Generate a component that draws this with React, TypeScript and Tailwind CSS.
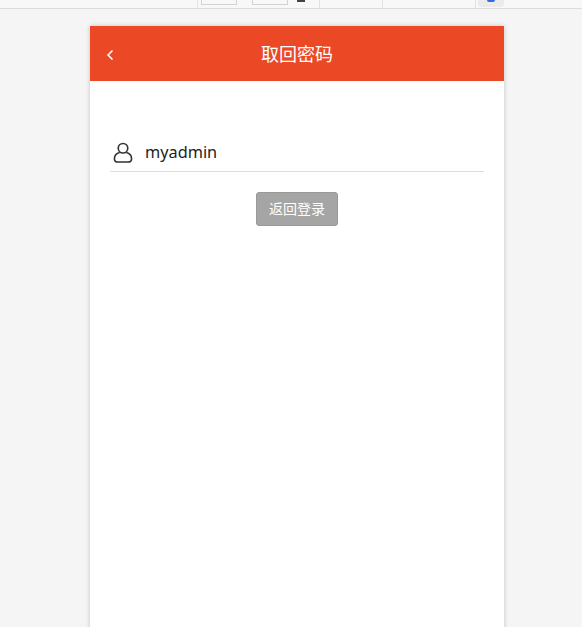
import { ChevronLeft } from "lucide-react"

export default function App() {
  return (
    <div className="h-[627px] overflow-hidden bg-[#f5f5f5] font-['Noto_Sans','Noto_Sans_CJK_SC',sans-serif]">
      {/* Browser toolbar, cut off at the top */}
      <div className="flex h-[9px] items-stretch border-b border-[#dcdcdc] bg-[#f8f8f8] pl-[197px]">
        <div className="flex w-[123px] items-start border-x border-[#e2e2e2] pl-[3px]">
          <div className="h-[5px] w-[36px] border-x border-b border-[#d4d4d4] bg-[#f8f8f8]" />
          <div className="ml-[15px] h-[5px] w-[36px] border-x border-b border-[#d4d4d4] bg-[#f8f8f8]" />
          <div className="ml-[9px] h-[2px] w-[8px] bg-[#444444]" />
        </div>
        <div className="w-[63px] border-r border-[#e2e2e2]" />
        <div className="w-[93px] border-r border-[#e2e2e2]" />
        <div className="ml-[2px] flex h-[7px] w-[26px] justify-center rounded-b-sm bg-[#ebebeb]">
          <div className="h-[2px] w-[8px] rounded-b-sm bg-[#2f6fd6]" />
        </div>
      </div>

      <div className="mt-[17px] ml-[90px] h-[640px] w-[414px] bg-white shadow-[0_0_5px_rgba(0,0,0,0.2)]">
        <header className="relative flex h-[55px] items-center justify-center bg-[#eb4926]">
          <ChevronLeft className="absolute top-[21px] left-[12px] h-4 w-4 text-white" strokeWidth={2.5} />
          <h1 className="pt-[1px] text-[18px] font-normal text-white">取回密码</h1>
        </header>

        <div className="px-[20px] pt-[52px]">
          <div className="flex h-[39px] items-center gap-[12px] border-b border-[#dddddd] pl-[3px]">
            <svg viewBox="0 0 21 22" className="h-[21px] w-[20px]" fill="none" stroke="#333333" strokeWidth="1.7">
              <circle cx="10.5" cy="6.5" r="5" />
              <path d="M7 11C3.5 12 1.5 14.5 1.5 17.5c0 2 1.2 3.500 3.500 3.500h11c2.300 0 3.500-1.500 3.500-3.500 0-3-2-5.500-5.500-6.500" />
            </svg>
            <span className="text-[16.3px] text-[#222222]">myadmin</span>
          </div>

          <div className="mt-[20px] flex justify-center">
            <button className="h-[34px] w-[82px] rounded-[3px] border border-[#999999] bg-[#a5a5a5] pb-[1px] text-[14px] text-white">
              返回登录
            </button>
          </div>
        </div>
      </div>
    </div>
  )
}
